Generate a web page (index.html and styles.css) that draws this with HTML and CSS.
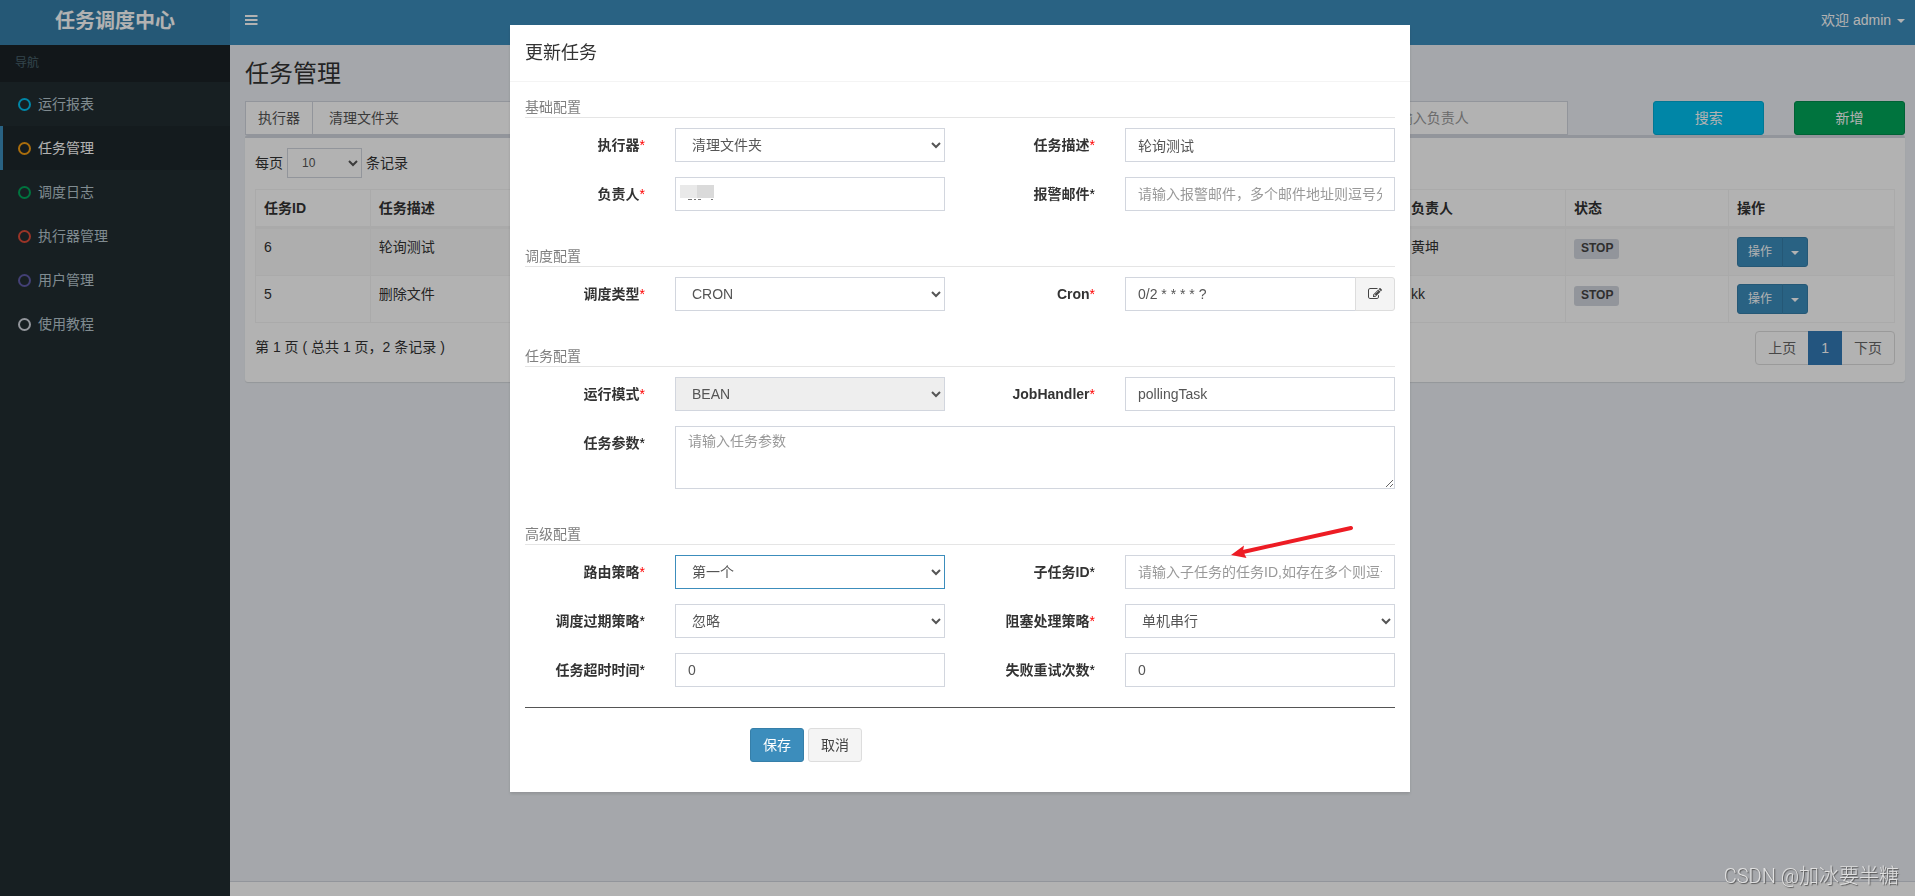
FILE: index.html
```html
<!DOCTYPE html>
<html lang="zh-CN">
<head>
<meta charset="utf-8">
<title>任务调度中心</title>
<link rel="stylesheet" href="styles.css">
</head>
<body>
<div class="app">
  <header class="topbar">
    <a class="logo" href="#">任务调度中心</a>
    <nav class="navbar">
      <button class="toggle" type="button" aria-label="Toggle navigation">
        <svg width="13" height="12" viewBox="0 0 13 12"><path d="M0 2h12.500M0 6h12.500M0 10h12.500" stroke="currentColor" stroke-width="2" fill="none"/></svg>
      </button>
      <a class="user" href="#">欢迎 admin <span class="caret"></span></a>
    </nav>
  </header>

  <aside class="sidebar">
    <div class="side-head">导航</div>
    <ul class="menu">
      <li><a href="#"><i class="ring aqua"></i>运行报表</a></li>
      <li class="active"><a href="#"><i class="ring yellow"></i>任务管理</a></li>
      <li><a href="#"><i class="ring green"></i>调度日志</a></li>
      <li><a href="#"><i class="ring red"></i>执行器管理</a></li>
      <li><a href="#"><i class="ring purple"></i>用户管理</a></li>
      <li><a href="#"><i class="ring gray"></i>使用教程</a></li>
    </ul>
  </aside>

  <main class="content">
    <h1 class="page-title">任务管理</h1>
    <div class="filters">
      <div class="filter-group">
        <label class="addon" for="f-group">执行器</label>
        <select class="control" id="f-group"><option>清理文件夹</option></select>
      </div>
      <div class="filter-author"><input class="control" type="text" placeholder="请输入负责人" aria-label="负责人"></div>
      <button class="btn btn-info" type="button">搜索</button>
      <button class="btn btn-success" type="button">新增</button>
    </div>

    <section class="box">
      <div class="page-size">
        <label for="size">每页</label>
        <select class="control control-sm" id="size"><option>10</option></select>
        <span>条记录</span>
      </div>
      <table class="jobs">
        <colgroup><col class="c-id"><col class="c-desc"><col><col class="c-author"><col class="c-state"><col class="c-act"></colgroup>
        <thead>
          <tr><th>任务ID</th><th>任务描述</th><th></th><th>负责人</th><th>状态</th><th>操作</th></tr>
        </thead>
        <tbody>
          <tr>
            <td>6</td><td>轮询测试</td><td></td><td>黄坤</td>
            <td><span class="tag">STOP</span></td>
            <td><div class="btn-group"><button class="btn btn-primary btn-sm" type="button">操作</button><button class="btn btn-primary btn-sm btn-caret" type="button" aria-label="更多操作"><span class="caret"></span></button></div></td>
          </tr>
          <tr>
            <td>5</td><td>删除文件</td><td></td><td>kk</td>
            <td><span class="tag">STOP</span></td>
            <td><div class="btn-group"><button class="btn btn-primary btn-sm" type="button">操作</button><button class="btn btn-primary btn-sm btn-caret" type="button" aria-label="更多操作"><span class="caret"></span></button></div></td>
          </tr>
        </tbody>
      </table>
      <div class="table-foot">
        <span>第 1 页 ( 总共 1 页，2 条记录 )</span>
        <nav class="pager"><a href="#">上页</a><a class="current" href="#">1</a><a href="#">下页</a></nav>
      </div>
    </section>
  </main>
  <footer class="footer"></footer>
</div>

<div class="backdrop">
  <div class="modal" role="dialog" aria-labelledby="dlg-title">
    <h2 class="modal-title" id="dlg-title">更新任务</h2>
    <form class="modal-body">
      <section class="part">
        <h3 class="part-title">基础配置</h3>
        <div class="fields">
          <label for="group">执行器<b class="req">*</b></label>
          <select class="control" id="group"><option>清理文件夹</option></select>
          <label for="desc">任务描述<b class="req">*</b></label>
          <input class="control" id="desc" type="text" value="轮询测试">
          <label for="author">负责人<b class="req">*</b></label>
          <div class="masked">
            <input class="control" id="author" type="text">
            <svg class="mask" width="34" height="15" viewBox="0 0 34 15"><path fill="#e9e9e9" d="M0 0h17v13H0z"/><path fill="#dadada" d="M17 0h17v13H17z"/><path fill="#777" d="M8 14h4v1H8zM14 14h2v1h-2zM18 14h3v1h-3zM31 14h2v1h-2z"/></svg>
          </div>
          <label for="mail">报警邮件<b>*</b></label>
          <input class="control" id="mail" type="text" placeholder="请输入报警邮件，多个邮件地址则逗号分隔">
        </div>
      </section>

      <section class="part">
        <h3 class="part-title">调度配置</h3>
        <div class="fields">
          <label for="type">调度类型<b class="req">*</b></label>
          <select class="control" id="type"><option>CRON</option></select>
          <label for="cron">Cron<b class="req">*</b></label>
          <div class="input-group">
            <input class="control" id="cron" type="text" value="0/2 * * * * ?">
            <button class="btn btn-default btn-edit" type="button" aria-label="编辑 Cron">
              <svg width="14" height="14" viewBox="0 0 1792 1792"><path fill="currentColor" d="M888 1184l116-116-152-152-116 116v56h96v96h56zm440-720q-16-16-33 1l-350 350q-17 17-1 33t33-1l350-350q17-17 1-33zm80 594v190q0 119-84.500 203.500t-203.500 84.500h-832q-119 0-203.500-84.500t-84.500-203.500v-832q0-119 84.500-203.500t203.500-84.500h832q63 0 117 25 15 7 18 23 3 17-9 29l-49 49q-14 14-32 8-23-6-45-6h-832q-66 0-113 47t-47 113v832q0 66 47 113t113 47h832q66 0 113-47t47-113v-126q0-13 9-22l64-64q15-15 35-7t20 29zm-96-738l288 288-672 672h-288v-288zm444 132l-92 92-288-288 92-92q28-28 68-28t68 28l152 152q28 28 28 68t-28 68z"/></svg>
            </button>
          </div>
        </div>
      </section>

      <section class="part">
        <h3 class="part-title">任务配置</h3>
        <div class="fields">
          <label for="mode">运行模式<b class="req">*</b></label>
          <select class="control" id="mode" disabled><option>BEAN</option></select>
          <label for="handler">JobHandler<b class="req">*</b></label>
          <input class="control" id="handler" type="text" value="pollingTask">
          <label for="param">任务参数<b>*</b></label>
          <textarea class="control wide" id="param" placeholder="请输入任务参数"></textarea>
        </div>
      </section>

      <section class="part">
        <h3 class="part-title">高级配置</h3>
        <div class="fields">
          <label for="route">路由策略<b class="req">*</b></label>
          <select class="control focused" id="route"><option>第一个</option></select>
          <label for="child">子任务ID<b>*</b></label>
          <input class="control" id="child" type="text" placeholder="请输入子任务的任务ID,如存在多个则逗号分隔">
          <label for="misfire">调度过期策略<b>*</b></label>
          <select class="control" id="misfire"><option>忽略</option></select>
          <label for="block">阻塞处理策略<b class="req">*</b></label>
          <select class="control" id="block"><option>单机串行</option></select>
          <label for="timeout">任务超时时间<b>*</b></label>
          <input class="control" id="timeout" type="text" value="0">
          <label for="retry">失败重试次数<b>*</b></label>
          <input class="control" id="retry" type="text" value="0">
        </div>
      </section>

      <hr class="rule">
      <div class="actions">
        <button class="btn btn-primary" type="button">保存</button>
        <button class="btn btn-default" type="button">取消</button>
      </div>
    </form>
    <svg class="arrow" width="124" height="36" viewBox="0 0 124 36"><path d="M120 4L12 28" stroke="#ed1c24" stroke-width="4" stroke-linecap="round"/><path d="M0 31L13 21.500 12 27 15.500 34z" fill="#ed1c24"/></svg>
  </div>
</div>
<div class="watermark">CSDN @加冰要半糖</div>
</body>
</html>
```

FILE: styles.css
```css
* { box-sizing: border-box; }

body {
  margin: 0;
  font: 14px/20px "Liberation Sans", "Noto Sans CJK SC", sans-serif;
  color: #333;
}
a { color: inherit; text-decoration: none; }
button, input, select, textarea { font: inherit; margin: 0; }

.app {
  display: grid;
  grid-template: 45px 1fr 15px / 230px 1fr;
  min-height: 100vh;
  background: #ecf0f5;
}

/* top bar */
.topbar {
  grid-column: 1 / -1;
  display: grid;
  grid-template-columns: 230px 1fr;
  color: #fff;
  line-height: 40px;
}
.logo { background: #367fa9; text-align: center; font-size: 20px; line-height: 42px; font-weight: bold; }
.navbar {
  display: flex;
  justify-content: space-between;
  align-items: flex-start;
  padding: 0 10px 0 15px;
  background: #3c8dbc;
}
.toggle { display: flex; align-items: center; height: 40px; padding: 0; border: 0; background: none; color: #fff; }
.caret {
  display: inline-block;
  margin-left: 2px;
  vertical-align: middle;
  border-top: 4px solid;
  border-left: 4px solid transparent;
  border-right: 4px solid transparent;
}

/* sidebar */
.sidebar { grid-row: 2 / 4; background: #222d32; }
.side-head { padding: 8px 15px 9px; background: #1a2226; color: #4b646f; font-size: 12px; }
.menu { margin: 0; padding: 0; list-style: none; color: #b8c7ce; }
.menu a {
  display: flex;
  align-items: center;
  gap: 7px;
  padding: 12px 15px;
  border-left: 3px solid transparent;
}
.menu .active a { border-color: #3c8dbc; background: #1e282c; color: #fff; }
.ring { width: 13px; height: 13px; border: 2px solid; border-radius: 50%; }
.aqua { color: #00c0ef; }
.yellow { color: #f39c12; }
.green { color: #00a65a; }
.red { color: #dd4b39; }
.purple { color: #605ca8; }
.gray { color: #d2d6de; }

/* controls */
.control {
  display: block;
  width: 100%;
  height: 34px;
  padding: 6px 12px;
  border: 1px solid #d2d6de;
  border-radius: 0;
  outline: 0;
  background: #fff;
  color: #555;
}
.control::placeholder { color: #999; opacity: 1; }
.control:disabled { background: #eee; opacity: 1; }
.control-sm { width: 75px; height: 30px; padding: 5px 10px; font-size: 12px; }
.focused { border-color: #3c8dbc; }
textarea.control { height: 63px; padding-top: 4px; resize: both; }

.btn {
  height: 34px;
  padding: 0 12px;
  border: 1px solid;
  border-radius: 3px;
  color: #fff;
}
.btn-primary { background: #3c8dbc; border-color: #367fa9; }
.btn-info { background: #00c0ef; border-color: #00acd6; }
.btn-success { background: #00a65a; border-color: #008d4c; }
.btn-default { background: #f4f4f4; border-color: #ddd; color: #444; }
.btn-sm { height: 30px; padding: 0 10px; font-size: 12px; }
.btn-group { display: flex; }
.btn-group .btn:first-child { border-radius: 3px 0 0 3px; }
.btn-group .btn-caret { margin-left: -1px; padding: 0 8px; border-radius: 0 3px 3px 0; }
.btn-caret .caret { margin: 0; }

/* page */
.content { min-width: 0; padding: 16px 10px 15px 15px; }
.page-title { margin: 0 0 14px; font-size: 24px; line-height: 26px; font-weight: normal; }
.filters { display: grid; grid-template-columns: repeat(12, 1fr); column-gap: 30px; }
.filters .btn { padding: 0; }
.filter-group { grid-column: span 3; display: flex; }
.addon {
  flex: none;
  padding: 6px 12px;
  border: 1px solid #d2d6de;
  border-right: 0;
  background: #fff;
  color: #555;
}
.filter-author { grid-column: 9 / span 2; padding-right: 55px; }

.box {
  padding: 10px 10px 17px;
  border-top: 3px solid #d2d6de;
  border-radius: 3px;
  background: #fff;
  box-shadow: 0 1px 1px rgba(0, 0, 0, .1);
}
.page-size { display: flex; align-items: center; gap: 4px; margin-bottom: 11px; }

.jobs { width: 100%; table-layout: fixed; border-collapse: collapse; }
.jobs th, .jobs td { padding: 8px; border: 1px solid #f4f4f4; text-align: left; vertical-align: top; }
.jobs th { border-bottom-width: 3px; }
.jobs tbody tr:first-child { background: #f9f9f9; }
.c-id { width: 7%; }
.c-desc { width: 20%; }
.c-author { width: 163px; }
.c-state { width: 163px; }
.c-act { width: 166px; }
.tag {
  display: inline-block;
  margin-top: 2px;
  padding: 0 6px 2px 7px;
  border-radius: 3px;
  background: #d2d6de;
  color: #444;
  font-size: 12px;
  line-height: 18px;
  font-weight: bold;
  vertical-align: top;
}
.table-foot { display: flex; justify-content: space-between; align-items: flex-start; padding-top: 8px; line-height: 32px; }
.pager { display: flex; border: 1px solid #ddd; border-radius: 4px; color: #666; }
.pager a { padding: 0 12px; }
.pager .current { margin: -1px 0; padding: 1px 13px; background: #337ab7; color: #fff; }

.footer { border-top: 1px solid #d2d6de; background: #fff; }

/* dialog */
.backdrop {
  position: fixed;
  inset: 0;
  padding: 25px 0 25px 5px;
  overflow: hidden;
  background: rgba(0, 0, 0, .3);
}
.modal {
  position: relative;
  width: min(900px, 100%);
  margin: 0 auto;
  background: #fff;
  box-shadow: 0 2px 3px rgba(0, 0, 0, .125);
}
.modal-title {
  margin: 0;
  padding: 15px;
  border-bottom: 1px solid #f4f4f4;
  font-size: 18px;
  line-height: 26px;
  font-weight: normal;
}
.modal-body { padding: 15px 15px 30px; }
.part { margin-bottom: 35px; }
.part:last-of-type { margin-bottom: 20px; }
.part-title {
  margin: 0 0 10px;
  border-bottom: 1px solid #e5e5e5;
  color: gray;
  font-size: 14px;
  font-weight: normal;
}
.fields { display: grid; grid-template-columns: 4fr 9fr 4fr 9fr; gap: 15px 30px; }
.fields label { padding-top: 7px; text-align: right; font-weight: bold; white-space: nowrap; }
.fields b { color: #000; font-weight: normal; }
.fields .req { color: #f00; }
.wide { grid-column: 2 / -1; }
.masked { position: relative; }
.mask { position: absolute; left: 5px; top: 8px; }
.input-group { display: flex; }
.input-group .control { flex: 1; min-width: 0; }
.btn-edit { width: 40px; margin-left: -1px; border-radius: 0 3px 3px 0; }
.btn-edit svg { display: block; }
.rule { margin: 0 0 20px; border: 0; border-top: 1px solid #555; }
.actions { display: flex; gap: 4px; padding-left: 225px; }
.arrow { position: absolute; left: 721px; top: 499px; }

.watermark {
  position: fixed;
  right: 16px;
  bottom: 5px;
  color: #e0e0e0;
  font: 20px/30px Roboto, "Noto Sans CJK SC", sans-serif;
  font-weight: 300;
  text-shadow: 1px 1px 1px #555;
}
```
